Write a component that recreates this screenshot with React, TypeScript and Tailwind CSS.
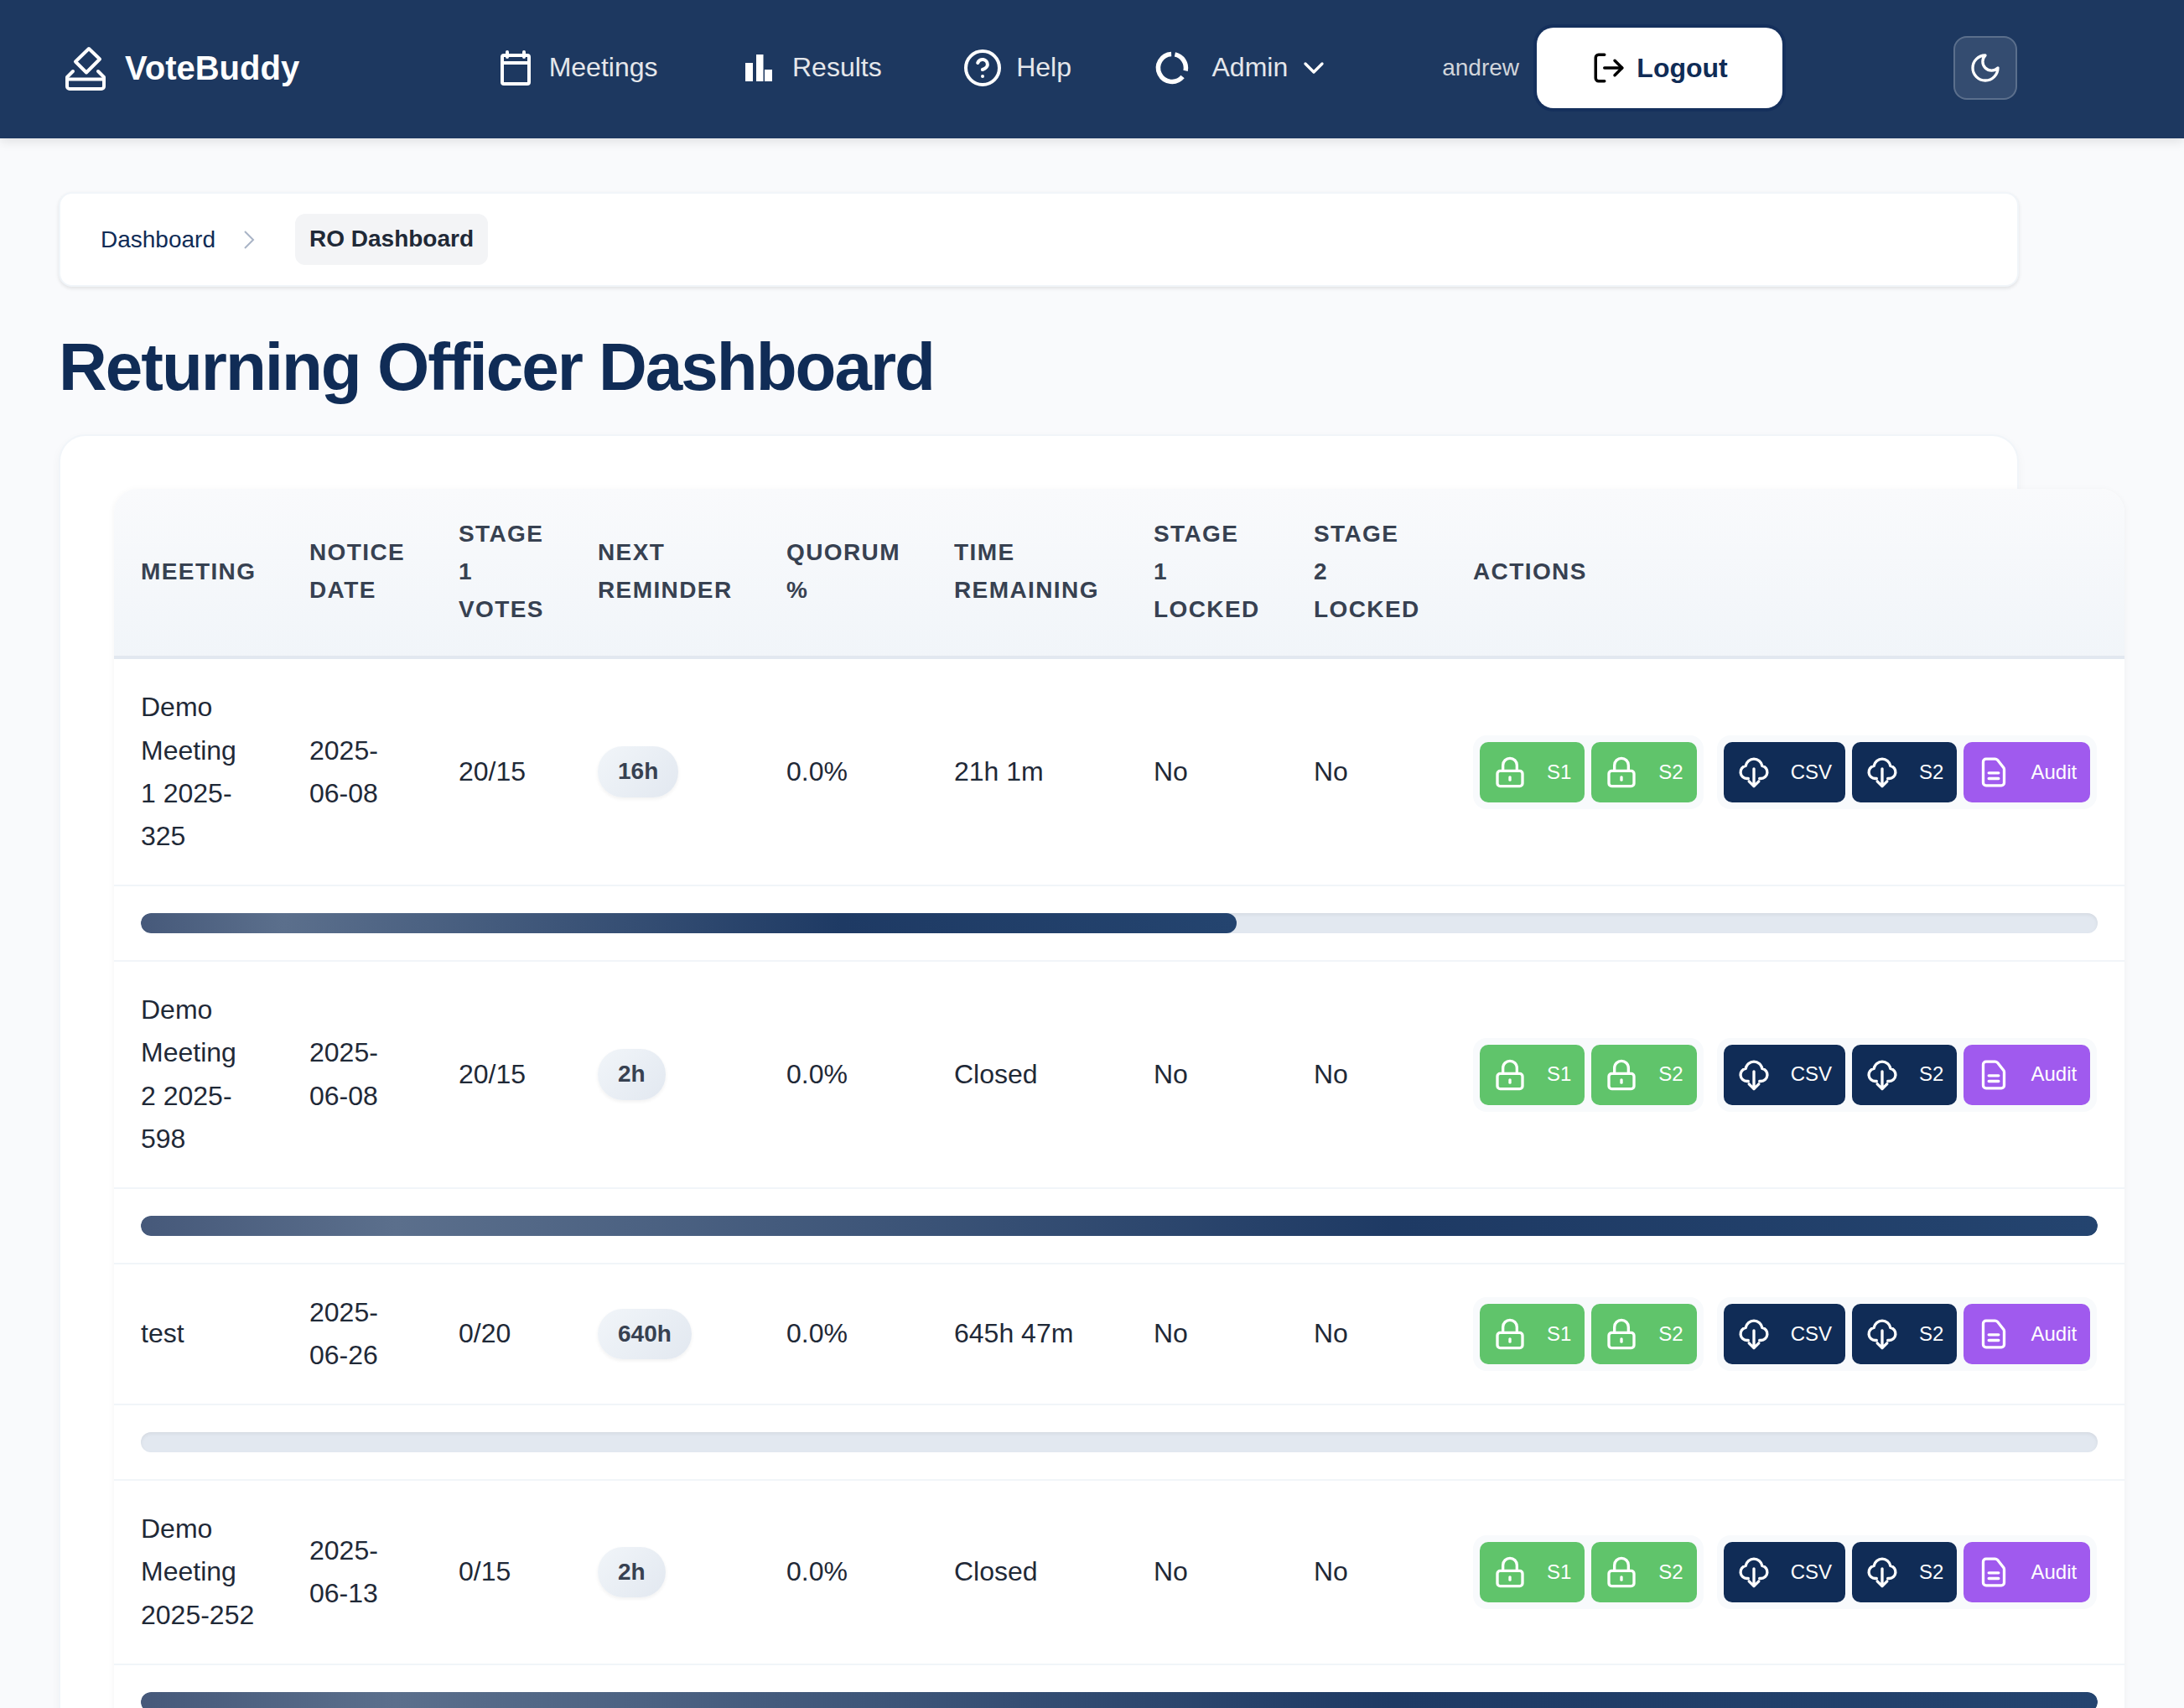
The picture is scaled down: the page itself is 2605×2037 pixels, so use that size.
import { ChevronDown, CircleHelp, LogOut } from 'lucide-react';

interface Meeting {
  lines: string;
  date: string;
  votes: string;
  reminder: string;
  remaining: string;
  progress: number;
}

const meetings: Meeting[] = [
  { lines: 'Demo Meeting 1 2025-325', date: '2025-06-08', votes: '20/15', reminder: '16h', remaining: '21h 1m', progress: 56 },
  { lines: 'Demo Meeting 2 2025-598', date: '2025-06-08', votes: '20/15', reminder: '2h', remaining: 'Closed', progress: 100 },
  { lines: 'test', date: '2025-06-26', votes: '0/20', reminder: '640h', remaining: '645h 47m', progress: 0 },
  { lines: 'Demo Meeting 2025-252', date: '2025-06-13', votes: '0/15', reminder: '2h', remaining: 'Closed', progress: 100 },
];

const LogoIcon = () => (
  <svg width="48" height="53" viewBox="0 0 48 53" fill="none" stroke="white" strokeWidth="4" strokeLinejoin="round" strokeLinecap="round">
    <path d="M28 3 L41 15.5 L25 31.5 L12 18.5 Z" />
    <path d="M9 30 L2 37 V48 a3 3 0 0 0 3 3 H43 a3 3 0 0 0 3-3 V37 L39 30" />
    <path d="M2 39.5 H46" />
  </svg>
);

const CalendarIcon = () => (
  <svg width="48" height="48" viewBox="0 0 48 48" fill="none" stroke="white" strokeWidth="4" strokeLinecap="round" strokeLinejoin="round">
    <rect x="8" y="9" width="32" height="34" rx="2" />
    <path d="M14 5v6M34 5v6M8 18h32" />
  </svg>
);

const BarsIcon = () => (
  <svg width="48" height="48" viewBox="0 0 48 48" fill="white">
    <rect x="8" y="18" width="9" height="22" />
    <rect x="21" y="8" width="8.5" height="32" />
    <rect x="31" y="26" width="9" height="14" />
  </svg>
);

const AdminIcon = () => (
  <svg width="48" height="48" viewBox="0 0 48 48" fill="none" stroke="white" strokeWidth="5.5">
    <path d="M23.1 7.5 A16.5 16.5 0 1 0 36.6 34.6" />
    <path d="M27.4 7.9 A16.5 16.5 0 0 1 40.1 27.4" />
  </svg>
);

const MoonIcon = () => (
  <svg width="40" height="40" viewBox="0 0 24 24" fill="none" stroke="white" strokeWidth="2" strokeLinecap="round" strokeLinejoin="round">
    <path d="M12 3a6 6 0 0 0 9 9 9 9 0 1 1-9-9Z" />
  </svg>
);

const LockIcon = () => (
  <svg width="40" height="40" viewBox="0 0 24 24" fill="none" stroke="white" strokeWidth="2" strokeLinecap="round" strokeLinejoin="round">
    <rect x="3" y="11" width="18" height="11" rx="2" />
    <path d="M7 11V7a5 5 0 0 1 10 0v4" />
    <path d="M12 15.5v2" />
  </svg>
);

const CloudIcon = () => (
  <svg width="40" height="40" viewBox="0 0 24 24" fill="none" stroke="white" strokeWidth="2" strokeLinecap="round" strokeLinejoin="round">
    <path d="M8 16.5H7a4.6 4.6 0 0 1-.9-9.1A6 6 0 0 1 17.9 7.4 A4.6 4.6 0 0 1 17 16.5h-1" />
    <path d="M12 9.5v12.5M8.5 18.5l3.5 3.5 3.5-3.5" />
  </svg>
);

const DocIcon = () => (
  <svg width="40" height="40" viewBox="0 0 24 24" fill="none" stroke="white" strokeWidth="2" strokeLinecap="round" strokeLinejoin="round">
    <path d="M6.5 21.5a2 2 0 0 1-2-2V4.5a2 2 0 0 1 2-2h6.5a2.4 2.4 0 0 1 1.7.7l4 5a2.4 2.4 0 0 1 .8 1.7v9.6a2 2 0 0 1-2 2z" />
    <path d="M8.5 12.5h7M8.5 16.5h7" />
  </svg>
);

const ActionButton = ({ color, icon, label }: { color: string; icon: React.ReactNode; label: string }) => (
  <button className={`flex h-[72px] items-center gap-6 rounded-[10px] px-4 text-[24px] text-white ${color}`}>
    {icon}
    <span>{label}</span>
  </button>
);

const Header = ({ label, className }: { label: string; className: string }) => (
  <th className={`border-b-4 border-[#e2e8f0] px-8 pt-8 pb-[33px] text-left text-[28px] leading-[1.6] font-bold tracking-[1.4px] text-[#374151] uppercase ${className}`}>
    {label}
  </th>
);

const cell = 'border-b-2 border-[#f1f5f9] px-8 py-8 text-[32px] leading-[1.6] text-[#1f2937]';

const MeetingRows = ({ meeting }: { meeting: Meeting }) => (
  <>
    <tr>
      <td className={cell}>{meeting.lines}</td>
      <td className={cell}>{meeting.date}</td>
      <td className={cell}>{meeting.votes}</td>
      <td className={cell}>
        <span className="inline-block rounded-[30px] bg-[linear-gradient(135deg,#f1f5f9,#e2e8f0)] px-6 py-2 text-[28px] font-bold text-[#374151] shadow-[0_2px_4px_rgba(0,0,0,0.06)]">
          {meeting.reminder}
        </span>
      </td>
      <td className={cell}>0.0%</td>
      <td className={cell}>{meeting.remaining}</td>
      <td className={cell}>No</td>
      <td className={cell}>No</td>
      <td className={cell}>
        <div className="flex gap-4">
          <div className="flex gap-2 rounded-2xl bg-[#f8fafc] p-2">
            <ActionButton color="bg-[#60c46b]" icon={<LockIcon />} label="S1" />
            <ActionButton color="bg-[#60c46b]" icon={<LockIcon />} label="S2" />
          </div>
          <div className="flex gap-2 rounded-2xl bg-[#f8fafc] p-2">
            <ActionButton color="bg-[#102c56]" icon={<CloudIcon />} label="CSV" />
            <ActionButton color="bg-[#102c56]" icon={<CloudIcon />} label="S2" />
            <ActionButton color="bg-[#a05aee]" icon={<DocIcon />} label="Audit" />
          </div>
        </div>
      </td>
    </tr>
    <tr>
      <td colSpan={9} className="border-b-2 border-[#f1f5f9] px-8 py-8">
        <div className="h-6 overflow-hidden rounded-xl bg-[#e2e8f0] shadow-[inset_0_2px_4px_rgba(0,0,0,0.06)]">
          <div
            className="h-full rounded-xl bg-[linear-gradient(90deg,#46597a_0%,#5b6f8c_13%,#1e3a64_64%,#24446f_100%)]"
            style={{ width: `${meeting.progress}%` }}
          />
        </div>
      </td>
    </tr>
  </>
);

export default function App() {
  return (
    <div className="h-[2037px] overflow-hidden bg-[#f9fafc] [font-family:'Liberation_Sans',Arial,sans-serif]">
      <nav className="flex h-[165px] items-center bg-[#1d3860] pb-[3px] pl-[78px] shadow-[0_4px_12px_rgba(0,0,0,0.1)]">
        <div className="flex items-center gap-[23px]">
          <LogoIcon />
          <span className="text-[40px] font-bold text-white">VoteBuddy</span>
        </div>
        <div className="ml-[233.5px] flex items-center gap-[96.5px] text-[32px] text-[#e5e7eb]">
          <a className="flex items-center gap-4">
            <CalendarIcon />
            <span className="pb-[3px]">Meetings</span>
          </a>
          <a className="flex items-center gap-4">
            <BarsIcon />
            <span className="pb-[3px]">Results</span>
          </a>
          <a className="flex items-center gap-4">
            <CircleHelp size={48} strokeWidth={2} color="white" />
            <span className="pb-[3px]">Help</span>
          </a>
          <a className="-ml-[1px] flex items-center gap-6">
            <AdminIcon />
            <span className="pb-[3px]">Admin</span>
            <ChevronDown size={40} strokeWidth={2} color="white" className="-ml-[13px]" />
          </a>
        </div>
        <span className="ml-[133px] text-[28px] text-[#d1d5db]">andrew</span>
        <button className="ml-[21px] flex h-24 w-[293px] items-center justify-center gap-3 rounded-[20px] bg-white text-[32px] font-bold text-[#102c56] ring-4 ring-[#15305c]">
          <LogOut size={42} strokeWidth={2} color="black" />
          Logout
        </button>
        <button className="ml-[204px] flex h-[76px] w-[76px] items-center justify-center rounded-2xl border-2 border-white/20 bg-white/10">
          <MoonIcon />
        </button>
      </nav>

      <main className="ml-[70px] w-[2338px] pt-[64px]">
        <div className="flex h-[113px] items-center rounded-2xl border-2 border-[#f1f5f9] bg-white pl-[48px] shadow-[0_2px_4px_rgba(0,0,0,0.1)]">
          <span className="text-[28px] text-[#102c56]">Dashboard</span>
          <svg className="ml-[33px]" width="14" height="22" viewBox="0 0 14 22" fill="none" stroke="#a9b4c6" strokeWidth="2">
            <path d="M2 1 L12 11 L2 21" />
          </svg>
          <span className="ml-[48px] rounded-xl bg-[#f3f4f6] px-[17px] py-2 text-[28px] leading-[1.6] font-bold text-[#1f2937]">
            RO Dashboard
          </span>
        </div>

        <h1 className="mt-[48px] mb-[32px] text-[80px] leading-[96px] font-bold tracking-[-2px] text-[#102c56]">
          Returning Officer Dashboard
        </h1>

        <div className="rounded-t-[32px] border-2 border-[#f1f5f9] bg-white px-16 pt-[63px] pb-16 shadow-[0_4px_12px_rgba(0,0,0,0.04)]">
          <div className="w-[2398px] rounded-t-[28px] bg-white shadow-[0_2px_8px_rgba(0,0,0,0.05)]">
            <table className="w-full table-fixed border-separate border-spacing-0">
              <thead className="bg-[linear-gradient(180deg,#f9fafc,#f1f5f9)]">
                <tr>
                  <Header label="Meeting" className="w-[201px] rounded-tl-[28px]" />
                  <Header label="Notice Date" className="w-[178px]" />
                  <Header label="Stage 1 Votes" className="w-[166px]" />
                  <Header label="Next Reminder" className="w-[225px]" />
                  <Header label="Quorum %" className="w-[200px]" />
                  <Header label="Time Remaining" className="w-[238px]" />
                  <Header label="Stage 1 Locked" className="w-[191px]" />
                  <Header label="Stage 2 Locked" className="w-[190px]" />
                  <Header label="Actions" className="rounded-tr-[28px]" />
                </tr>
              </thead>
              <tbody>
                {meetings.map((meeting) => (
                  <MeetingRows key={meeting.lines} meeting={meeting} />
                ))}
              </tbody>
            </table>
          </div>
        </div>
      </main>
    </div>
  );
}
